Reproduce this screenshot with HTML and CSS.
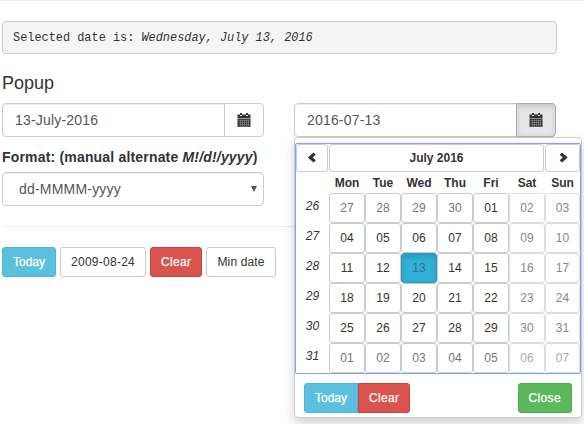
FILE: index.html
```html
<!DOCTYPE html>
<html lang="en">
<head>
  <meta charset="UTF-8" />
  <title>Datepicker</title>
  <link rel="stylesheet" href="styles.css">
</head>
<body>
  <hr class="top-rule">
  <pre class="selected">Selected date is: <em>Wednesday, July 13, 2016</em></pre>
  <h4>Popup</h4>

  <div class="row">
    <div class="col">
      <div class="input-group">
        <input class="form-control" type="text" value="13-July-2016">
        <button class="btn-cal"><svg class="cal" viewBox="0 0 14 14"><path d="M3 0h2v2H3zM9 0h2v2H9z"/><path d="M.5 1.500H3V3h2V1.500h4V3h2V1.500h2.500V5H.5zM.5 5.500h13V14H.5z"/><path fill="#fff" opacity=".5" d="M1.500 7h11v.5h-11zM1.500 9h11v.5h-11zM1.500 11h11v.5h-11zM1.500 13h11v.5h-11zM3 6.500h.5v7H3zM5 6.500h.5v7H5zM7 6.500h.5v7H7zM9 6.500h.5v7H9zM11 6.500h.5v7H11z"/></svg></button>
      </div>
      <label class="format-label">Format: (manual alternate <em>M!/d!/yyyy</em>)</label>
      <div class="select-wrap">
        <select class="form-control">
          <option>dd-MMMM-yyyy</option>
        </select>
      </div>
    </div>

    <div class="col">
      <div class="input-group">
        <input class="form-control" type="text" value="2016-07-13">
        <button class="btn-cal active"><svg class="cal" viewBox="0 0 14 14"><path d="M3 0h2v2H3zM9 0h2v2H9z"/><path d="M.5 1.500H3V3h2V1.500h4V3h2V1.500h2.500V5H.5zM.5 5.500h13V14H.5z"/><path fill="#fff" opacity=".5" d="M1.500 7h11v.5h-11zM1.500 9h11v.5h-11zM1.500 11h11v.5h-11zM1.500 13h11v.5h-11zM3 6.500h.5v7H3zM5 6.500h.5v7H5zM7 6.500h.5v7H7zM9 6.500h.5v7H9zM11 6.500h.5v7H11z"/></svg></button>
      </div>

      <div class="dropdown">
        <div class="calendar" id="calendar">
          <div class="cal-head">
            <button class="nav"><svg class="chev" viewBox="0 0 12 12"><path d="M7.500 .5 9.800 2.800 6.800 5.500l3 2.700-2.300 2.300L1.800 5.500z"/></svg></button>
            <button class="title">July 2016</button>
            <button class="nav"><svg class="chev" viewBox="0 0 12 12"><path d="M5 .5 2.700 2.800l3 2.700-3 2.700L5 10.500l5.700-5z"/></svg></button>
          </div>
          <div class="cal-grid" id="cal-grid"></div>
        </div>
        <div class="cal-foot">
          <div class="btn-pair">
            <button class="btn info">Today</button><button class="btn danger">Clear</button>
          </div>
          <button class="btn success">Close</button>
        </div>
      </div>
    </div>
  </div>

  <hr class="mid-rule">

  <div class="actions">
    <button class="btn info">Today</button>
    <button class="btn plain date">2009-08-24</button>
    <button class="btn danger">Clear</button>
    <button class="btn plain">Min date</button>
  </div>

  <script>
    const grid = document.getElementById("cal-grid");
    const names = ["Mon", "Tue", "Wed", "Thu", "Fri", "Sat", "Sun"];
    const weeks = [
      [26, [27, 28, 29, 30, 1, 2, 3]],
      [27, [4, 5, 6, 7, 8, 9, 10]],
      [28, [11, 12, 13, 14, 15, 16, 17]],
      [29, [18, 19, 20, 21, 22, 23, 24]],
      [30, [25, 26, 27, 28, 29, 30, 31]],
      [31, [1, 2, 3, 4, 5, 6, 7]],
    ];

    let html = '<span></span>' + names.map((n) => `<span class="wd">${n}</span>`).join("");
    weeks.forEach(([week, days], w) => {
      html += `<span class="wk">${week}</span>`;
      days.forEach((day, i) => {
        // first and last rows hold days of other months
        const outside = (w === 0 && day > 20) || (w === 5);
        const weekend = i > 4;
        let cls = "day";
        if (outside) cls += " muted";
        if (weekend) cls += " weekend";
        if (day === 13 && w === 2) cls += " picked";
        html += `<button class="${cls}">${String(day).padStart(2, "0")}</button>`;
      });
    });
    grid.innerHTML = html;
  </script>
</body>
</html>
```

FILE: styles.css
```css
* {
  box-sizing: border-box;
}
body {
  font-family: "Liberation Sans", Arial, sans-serif;
  font-size: 14px;
  line-height: 20px;
  color: #333;
  margin: 0;
  padding: 0 0 0 2px;
  background: #fff;
  min-height: 100vh;
  overflow: hidden;
}
.top-rule {
  border: 0;
  border-top: 1px solid #eee;
  margin: 0 0 20px -2px;
}
.selected {
  width: 555px;
  height: 33px;
  margin: 0 0 19px 0;
  padding: 9px 10px;
  font-family: "Liberation Mono", monospace;
  font-size: 11.9px;
  line-height: 14px;
  background: #f5f5f5;
  border: 1px solid #ccc;
  border-radius: 4px;
}
h4 {
  font-size: 18px;
  font-weight: 400;
  line-height: 20px;
  margin: 0 0 10px 0;
}
.row {
  display: flex;
  gap: 30px;
}
.col {
  width: 262px;
  position: relative;
}
.input-group {
  display: flex;
  height: 34px;
}
.form-control {
  display: block;
  width: 100%;
  height: 34px;
  padding: 6px 12px;
  font-family: inherit;
  font-size: 14px;
  letter-spacing: 0.18px;
  color: #555;
  background: #fff;
  border: 1px solid #ccc;
  border-radius: 4px;
  box-shadow: inset 0 1px 1px rgba(0, 0, 0, 0.075);
}
.input-group .form-control {
  flex: 1;
  min-width: 0;
  border-radius: 4px 0 0 4px;
}
.btn-cal {
  width: 40px;
  margin-left: -1px;
  padding: 0;
  display: flex;
  align-items: center;
  justify-content: center;
  background: #fff;
  border: 1px solid #ccc;
  border-radius: 0 4px 4px 0;
}
.btn-cal.active {
  background: #e6e6e6;
  border-color: #adadad;
  box-shadow: inset 0 3px 5px rgba(0, 0, 0, 0.125);
}
.cal {
  width: 14px;
  height: 14px;
  fill: #333;
}
.format-label {
  display: block;
  font-weight: 700;
  letter-spacing: 0.18px;
  margin: 10px 0 5px 0;
}
.select-wrap {
  position: relative;
}
.select-wrap select {
  appearance: none;
  padding-left: 16px;
  letter-spacing: 0.2px;
}
.select-wrap::after {
  content: "";
  position: absolute;
  right: 7px;
  top: 14px;
  border-top: 6px solid #555;
  border-left: 3.500px solid transparent;
  border-right: 3.500px solid transparent;
}
.mid-rule {
  border: 0;
  border-top: 1px solid #eee;
  margin: 20px 0 20px 0;
  width: 580px;
}
.actions {
  display: flex;
  gap: 4px;
}
.btn {
  height: 30px;
  padding: 5px 10px;
  font-family: inherit;
  font-size: 12px;
  line-height: 18px;
  letter-spacing: 0.15px;
  color: #333;
  background: #fff;
  border: 1px solid #ccc;
  border-radius: 3px;
}
.btn.date {
  letter-spacing: 0.26px;
}
.btn.info {
  letter-spacing: 0;
  color: #fff;
  background: #5bc0de;
  border-color: #46b8da;
  -webkit-text-stroke: 0.25px #fff;
}
.btn.danger {
  letter-spacing: 0.35px;
  color: #fff;
  background: #d9534f;
  border-color: #d43f3a;
  -webkit-text-stroke: 0.25px #fff;
}
.btn.success {
  letter-spacing: 0.35px;
  color: #fff;
  background: #5cb85c;
  border-color: #4cae4c;
  -webkit-text-stroke: 0.25px #fff;
}
/* popup calendar */
.dropdown {
  position: absolute;
  top: 34px;
  left: 0;
  width: 288px;
  height: 281px;
  padding-top: 5px;
  background: #fff;
  border: 1px solid #ccc;
  border-radius: 4px;
  box-shadow: 0 6px 12px rgba(0, 0, 0, 0.175);
}
.calendar {
  border: 1px solid #7fa6ee;
  border-radius: 2px;
  height: 231px;
  margin: 0;
  box-shadow: 0 0 1px #7fa6ee;
}
.cal-head {
  display: flex;
  height: 28px;
}
.cal-head button {
  height: 28px;
  padding: 0;
  background: #fff;
  border: 1px solid #ccc;
  border-radius: 3px;
  font-family: inherit;
  color: #333;
}
.nav {
  width: 32px;
  display: flex;
  align-items: center;
  justify-content: center;
}
.cal-head .nav:first-child {
  margin-right: 1px;
}
.cal-head .nav:last-child {
  width: 35px;
  margin-left: 1px;
}
.chev {
  width: 12px;
  height: 12px;
  fill: #333;
}
.cal-head .title {
  flex: 1;
  font-size: 12px;
  font-weight: 700;
}
.cal-grid {
  display: grid;
  grid-template-columns: 33px repeat(6, 36px) 35px;
  grid-template-rows: 21px repeat(6, 30px);
}
.wd {
  text-align: center;
  font-size: 12px;
  font-weight: 700;
  line-height: 23px;
}
.wk {
  text-align: center;
  font-size: 12px;
  font-style: italic;
  line-height: 27px;
}
.day {
  padding: 0;
  font-family: inherit;
  font-size: 12px;
  color: #333;
  background: #fff;
  border: 1px solid #ccc;
  border-radius: 3px;
}
.day.muted {
  color: #777;
}
.day.weekend {
  color: #888;
  border-color: #ddd;
}
.day.muted.weekend {
  color: #aaa;
}
.day.picked {
  color: #31708f;
  background: #31b0d5;
  border-color: #269abc;
  box-shadow: inset 0 3px 5px rgba(0, 0, 0, 0.125);
}
.cal-foot {
  display: flex;
  justify-content: space-between;
  padding: 9px 9px 0 9px;
}
.btn-pair {
  display: flex;
}
.btn-pair .info {
  border-radius: 3px 0 0 3px;
}
.btn-pair .danger {
  border-radius: 0 3px 3px 0;
}
```
